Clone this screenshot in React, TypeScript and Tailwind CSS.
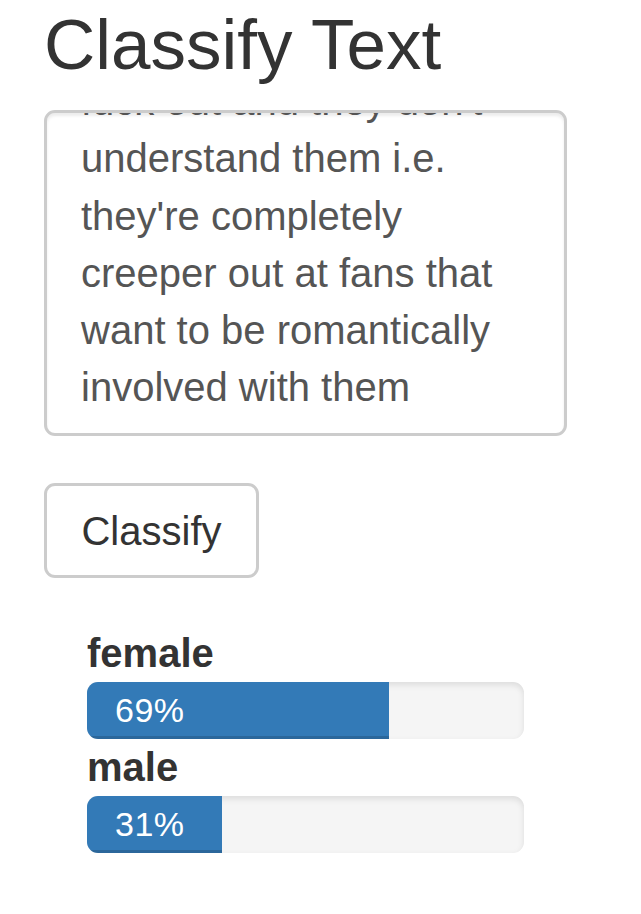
import { useLayoutEffect, useRef, useState } from 'react'

const sampleText =
  "Because they freak the fuck out and they don't understand them i.e. they're completely creeper out at fans that want to be romantically involved with them"

const results = [
  { label: 'female', value: 69 },
  { label: 'male', value: 31 }
]

const ResultBar = ({ label, value }: { label: string; value: number }) => {
  return (
    <div>
      <p className="text-[40px] leading-[57.2px] font-bold text-[#333]">{label}</p>
      <div className="h-[57px] rounded-[11px] bg-[#f5f5f5] overflow-hidden shadow-[inset_0_3px_6px_rgba(0,0,0,0.1)]">
        <div
          className="h-full bg-[#337ab7] pl-[28px] text-[34px] leading-[57px] tracking-[0.5px] text-white shadow-[inset_0_-3px_0_rgba(0,0,0,0.15)]"
          style={{ width: `${value}%` }}
        >
          {value}%
        </div>
      </div>
    </div>
  )
}

const App = () => {
  const [text, setText] = useState(sampleText)
  const areaRef = useRef<HTMLTextAreaElement>(null)

  useLayoutEffect(() => {
    if (areaRef.current) {
      areaRef.current.scrollTop = areaRef.current.scrollHeight
    }
  }, [])

  return (
    <div className="min-h-screen bg-white font-['Liberation_Sans',Arial,sans-serif]">
      <div className="w-[567px] pl-[44px] pt-[5px]">
        <h1 className="text-[71px] leading-[80px] font-normal text-[#333]">Classify Text</h1>

        <textarea
          ref={areaRef}
          value={text}
          onChange={(e) => setText(e.target.value)}
          className="mt-[25px] block w-full h-[326px] resize-none overflow-hidden rounded-[11px] border-[3px] border-[#ccc] px-[34px] py-[17px] text-[40px] leading-[57.2px] text-[#555] shadow-[inset_0_3px_3px_rgba(0,0,0,0.075)] outline-none"
        />

        <button className="mt-[47px] block h-[95px] w-[215px] rounded-[11px] border-[3px] border-[#ccc] bg-white text-[40px] text-[#333]">
          Classify
        </button>

        <div className="mt-[47px] px-[43px]">
          {results.map((r) => (
            <ResultBar key={r.label} label={r.label} value={r.value} />
          ))}
        </div>
      </div>
    </div>
  )
}

export default App
